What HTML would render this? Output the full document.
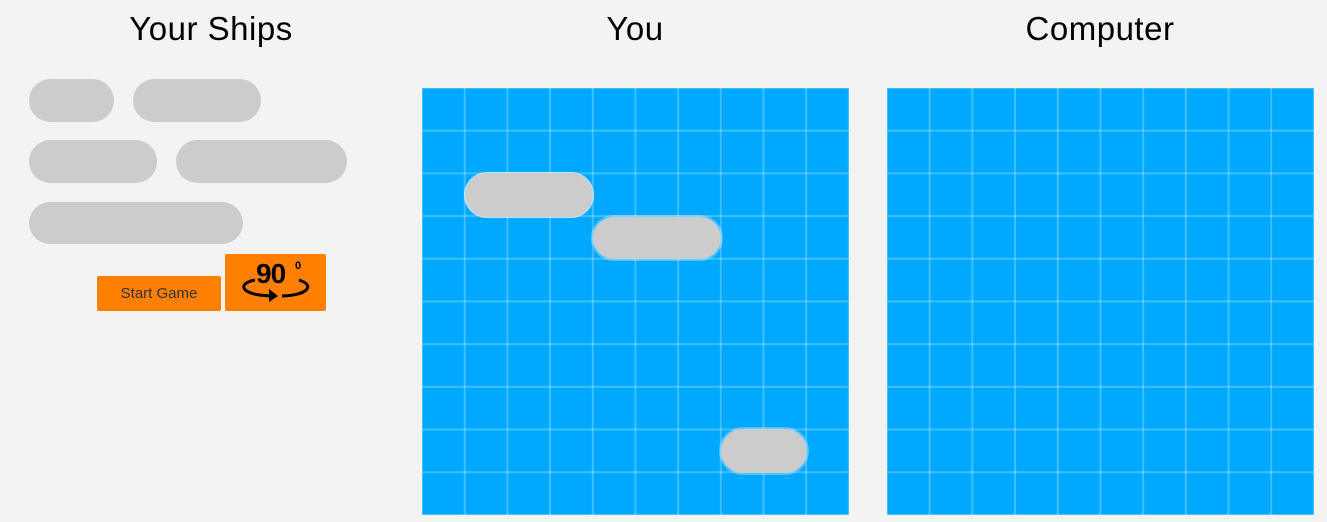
<!DOCTYPE html>
<html><head><meta charset="utf-8"><style>
body{margin:0;width:1327px;height:522px;background:#f3f3f3;position:relative;overflow:hidden;font-family:"Liberation Sans",sans-serif}
h1{position:absolute;top:10px;margin:0;font-weight:400;font-size:33px;letter-spacing:.5px;color:#000;transform:translateX(-50%);white-space:nowrap}
.s{position:absolute;background:#cccccc;border-radius:22px}
.g{position:absolute;top:88px;width:427px;height:427px;background-color:#00a9ff;
background-image:linear-gradient(to right,rgba(255,255,255,.25) 2px,transparent 2px),linear-gradient(to bottom,rgba(255,255,255,.25) 2px,transparent 2px);
background-size:42.7px 42.7px;background-position:-1px -1px}
.p{position:absolute;background:#cccccc;border-radius:23px;box-shadow:0 0 0 2px rgba(255,255,255,.3)}
.btn{position:absolute;background:#ff8000;border-radius:2px}
</style></head><body>
<h1 style="left:211px">Your Ships</h1>
<h1 style="left:635px">You</h1>
<h1 style="left:1100px">Computer</h1>
<div class="s" style="left:29px;top:79px;width:85px;height:43px"></div>
<div class="s" style="left:133px;top:79px;width:128px;height:43px"></div>
<div class="s" style="left:29px;top:140px;width:128px;height:43px"></div>
<div class="s" style="left:176px;top:140px;width:171px;height:43px"></div>
<div class="s" style="left:29px;top:202px;width:214px;height:42px"></div>
<div class="btn" style="left:97px;top:276px;width:124px;height:35px;color:#333;font-size:15px;line-height:35px;text-align:center">Start Game</div>
<div class="btn" style="left:225px;top:254px;width:101px;height:57px">
<svg width="101" height="57" viewBox="0 0 101 57">
<text x="31" y="29" font-family="Liberation Sans" font-weight="700" font-size="28" fill="#000" letter-spacing="-1">90</text>
<text x="70" y="15" font-family="Liberation Sans" font-weight="700" font-size="11" fill="#000">0</text>
<path d="M30 26 C14 29 15 38 34 41 L46 42" fill="none" stroke="#000" stroke-width="3"/>
<path d="M44 35 L53 42 L44 48 Z" fill="#000"/>
<path d="M57 42 C84 41 90 31 74 26" fill="none" stroke="#000" stroke-width="3"/>
</svg></div>
<div class="g" style="left:422px"></div>
<div class="g" style="left:887px"></div>
<div class="p" style="left:465px;top:173px;width:128px;height:44px;box-shadow:0 0 0 1px rgba(255,255,255,.7)"></div>
<div class="p" style="left:593px;top:217px;width:128px;height:42px"></div>
<div class="p" style="left:721px;top:429px;width:86px;height:44px"></div>
</body></html>
